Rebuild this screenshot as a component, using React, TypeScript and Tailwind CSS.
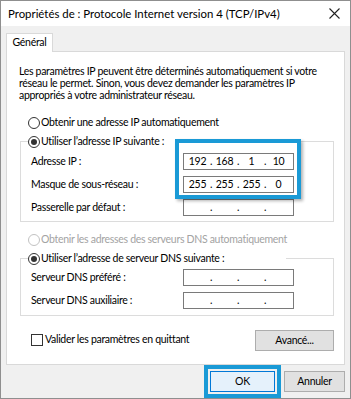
import React from "react";

function Radio({ checked, disabled }: { checked?: boolean; disabled?: boolean }) {
  return (
    <span
      className={
        "flex h-[12px] w-[12px] shrink-0 items-center justify-center rounded-full border bg-white " +
        (disabled ? "border-[#c2c2c2]" : "border-[#333333]")
      }
    >
      {checked && <span className="h-[6px] w-[6px] rounded-full bg-[#333333]" />}
    </span>
  );
}

function IpField({ parts }: { parts?: string[] }) {
  const p = parts ?? ["", "", "", ""];
  return (
    <div className="flex h-[17px] w-[111px] items-center border border-[#7a7a7a] bg-white pl-[2px]">
      {p.map((v, i) => (
        <React.Fragment key={i}>
          <span className="w-[23px] text-center">{v}</span>
          {i < 3 && <span className="w-[4px] text-center">.</span>}
        </React.Fragment>
      ))}
    </div>
  );
}

function Row({ label, parts }: { label: string; parts?: string[] }) {
  return (
    <div className="grid grid-cols-[152px_111px] items-center">
      <span>{label}</span>
      <IpField parts={parts} />
    </div>
  );
}

export default function App() {
  return (
    <div className="flex h-[399px] w-[351px] flex-col whitespace-nowrap border border-[#8f8f8f] bg-[#f0f0f0] font-['Lato',sans-serif] text-[10.5px] tracking-[-0.3px] text-black">
      {/* title bar */}
      <div className="flex h-[25px] shrink-0 items-center justify-between bg-white pl-[7px] pr-[10px]">
        <span className="text-[11.4px] tracking-normal">Propriétés de : Protocole Internet version 4 (TCP/IPv4)</span>
        <svg width="11" height="11" viewBox="0 0 11 11">
          <path d="M0.5 0.5 L10.5 10.5 M10.5 0.5 L0.5 10.5" stroke="#222" strokeWidth="1.1" />
        </svg>
      </div>

      <div className="flex flex-col px-[5px] pt-[7px]">
        {/* tab */}
        <div className="relative z-10 -mb-px flex h-[19px] w-[47px] items-center justify-center border border-b-0 border-[#d9d9d9] bg-white">
          Général
        </div>

        {/* panel */}
        <div className="relative flex h-[314px] flex-col border border-[#d9d9d9] bg-white">
          <p className="ml-[12px] mt-[13px] leading-[12px]">
            Les paramètres IP peuvent être déterminés automatiquement si votre
            <br />
            réseau le permet. Sinon, vous devez demander les paramètres IP
            <br />
            appropriés à votre administrateur réseau.
          </p>

          <div className="ml-[21px] mt-[15px] flex h-[13px] items-center gap-[1px]">
            <Radio />
            <span>Obtenir une adresse IP automatiquement</span>
          </div>

          <fieldset className="ml-[13px] mt-[6px] w-[314px] border border-[#dcdcdc] pb-[5px] pl-[10px]">
            <legend className="-ml-[3px] flex h-[13px] items-center gap-[1px] pr-[14px]">
              <Radio checked />
              <span>Utiliser l’adresse IP suivante :</span>
            </legend>
            <div className="mt-[5px] flex flex-col gap-[6px]">
              <Row label="Adresse IP :" parts={["192", "168", "1", "10"]} />
              <Row label="Masque de sous-réseau :" parts={["255", "255", "255", "0"]} />
              <Row label="Passerelle par défaut :" />
            </div>
          </fieldset>

          <div className="ml-[21px] mt-[11px] flex h-[13px] items-center gap-[1px] text-[#a3a3a3]">
            <Radio disabled />
            <span>Obtenir les adresses des serveurs DNS automatiquement</span>
          </div>

          <fieldset className="ml-[13px] mt-[6px] w-[314px] border border-[#dcdcdc] pb-[6px] pl-[10px]">
            <legend className="-ml-[3px] flex h-[13px] w-[258px] items-center gap-[1px]">
              <Radio checked />
              <span>Utiliser l’adresse de serveur DNS suivante :</span>
            </legend>
            <div className="mt-[4px] flex flex-col gap-[6px]">
              <Row label="Serveur DNS préféré :" />
              <Row label="Serveur DNS auxiliaire :" />
            </div>
          </fieldset>

          <div className="ml-[24px] mr-[10px] mt-[14px] flex items-start justify-between">
            <div className="mt-[2px] flex items-center gap-[2px]">
              <span className="h-[12px] w-[12px] border border-[#333333] bg-white" />
              <span>Valider les paramètres en quittant</span>
            </div>
            <button className="h-[21px] w-[79px] border border-[#adadad] bg-[#e1e1e1]">Avancé...</button>
          </div>

          {/* highlight around IP fields */}
          <div className="pointer-events-none absolute left-[168px] top-[87px] h-[60px] w-[126px] border-4 border-[#1a9ad6] shadow-[2px_2px_3px_rgba(0,0,0,0.3)]" />
        </div>

        {/* bottom buttons */}
        <div className="flex items-start justify-end gap-[3px]">
          <div className="border-4 border-[#1a9ad6] p-[2px]">
            <button className="h-[21px] w-[65px] border border-[#0078d7] bg-[#e5f1fb]">OK</button>
          </div>
          <button className="mt-[6px] h-[21px] w-[61px] border border-[#adadad] bg-[#e1e1e1]">Annuler</button>
        </div>
      </div>
    </div>
  );
}
